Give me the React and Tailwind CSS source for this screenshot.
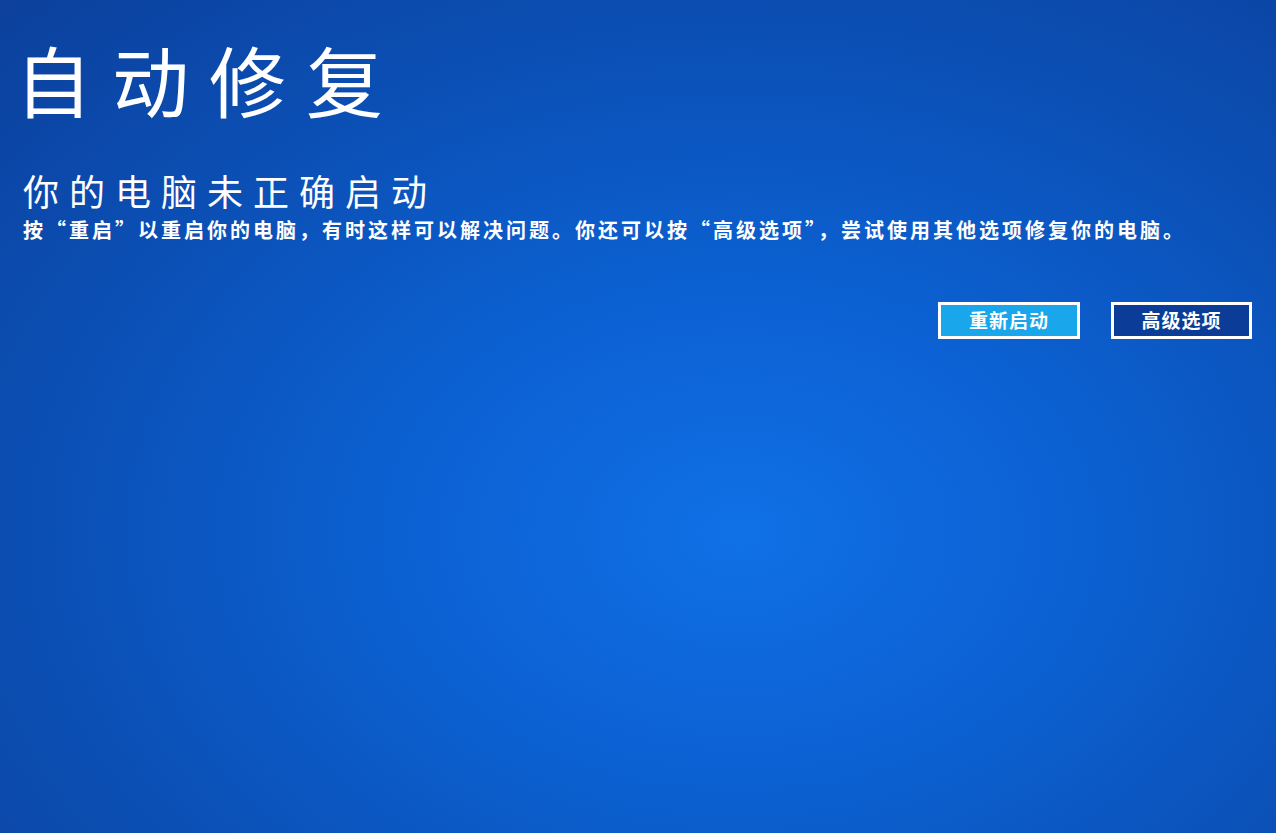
export default function App() {
  return (
    <div
      className="h-screen w-full overflow-hidden text-white bg-[radial-gradient(ellipse_at_58%_64%,#1070e6_0%,#0c62d4_30%,#0b50b6_65%,#0c409c_100%)]"
      style={{ fontFamily: '"Noto Sans CJK SC", "Noto Sans", sans-serif' }}
    >
      <div className="pl-[15px] pt-[40px]">
        <h1 className="text-[77px] leading-none font-normal tracking-[20px]">自动修复</h1>
      </div>

      <div className="pl-[23px] pt-[55px]">
        <h2 className="text-[36px] leading-none font-normal tracking-[10px]">你的电脑未正确启动</h2>
        <p className="mt-[12px] text-[20px] leading-none font-bold tracking-[3px]">
          按“重启”以重启你的电脑，有时这样可以解决问题。你还可以按“高级选项”，尝试使用其他选项修复你的电脑。
        </p>
      </div>

      <div className="flex justify-end gap-[31px] pr-[24px] pt-[62px]">
        <button className="w-[142px] h-[37px] border-[3px] border-white bg-[#1aa6ea] text-[19px] font-bold tracking-[1px] text-white">
          重新启动
        </button>
        <button className="w-[141px] h-[37px] border-[3px] border-white bg-[#0b3c98] text-[19px] font-bold tracking-[1px] text-white">
          高级选项
        </button>
      </div>
    </div>
  );
}
